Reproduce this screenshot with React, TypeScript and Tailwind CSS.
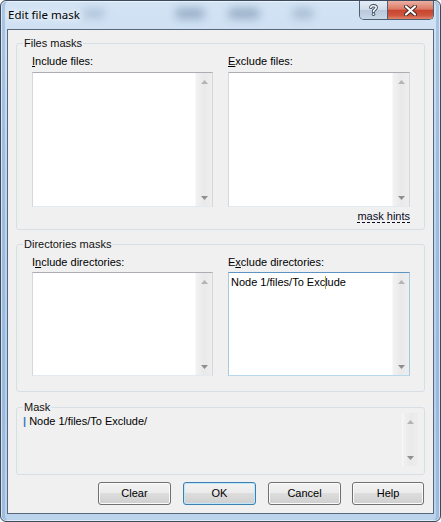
import type { ReactNode } from "react";

// small disabled-looking arrow used by the scroll bars
function Arrow({ dir }: { dir: "up" | "down" }) {
  return (
    <svg width="7" height="4" viewBox="0 0 7 4" className="block">
      {dir === "up" ? (
        <polygon points="3.5,0 7,4 0,4" fill="#b4b4b4" />
      ) : (
        <polygon points="0,0 7,0 3.5,4" fill="#8f8f8f" />
      )}
    </svg>
  );
}

function ScrollBar({ className }: { className: string }) {
  return (
    <div
      className={`flex flex-col justify-between border-l border-[#f8f8f8] bg-[linear-gradient(90deg,#f2f2f2,#e9e9e9_50%,#eeeeee)] ${className}`}
    >
      <div className="flex h-[17px] items-center justify-center">
        <Arrow dir="up" />
      </div>
      <div className="flex h-[17px] items-center justify-center">
        <Arrow dir="down" />
      </div>
    </div>
  );
}

function ListBox({
  size,
  focused,
  children,
}: {
  size: string;
  focused?: boolean;
  children?: ReactNode;
}) {
  return (
    <div
      className={`flex border bg-white ${size} ${
        focused
          ? "border-[#a4c9e3] border-t-[#5d94c4] border-b-[#b7d9ed]"
          : "border-[#d4d7dd] border-t-[#abadb3] border-b-[#e3e9ef]"
      }`}
    >
      <div className="flex-1 pl-[2px] pt-[3px]">{children}</div>
      <ScrollBar className="w-[17px]" />
    </div>
  );
}

function GroupBox({
  title,
  className,
  children,
}: {
  title: string;
  className: string;
  children: ReactNode;
}) {
  return (
    <div className={`relative mx-[8px] rounded-[3px] border border-[#d5dfe5] ${className}`}>
      <span className="absolute -top-[7px] left-[6px] bg-[#f0f0f0] px-[1px] text-[#101010]">
        {title}
      </span>
      {children}
    </div>
  );
}

// label with an underlined access key
function Label({ before, keyChar, after }: { before?: string; keyChar: string; after: string }) {
  return (
    <div className="h-[13px]">
      {before}
      <span className="underline decoration-1 underline-offset-[1px]">{keyChar}</span>
      {after}
    </div>
  );
}

function Button({ label, primary, width = "w-[73px]" }: { label: string; primary?: boolean; width?: string }) {
  return (
    <button
      className={`h-[23px] ${width} rounded-[3px] border bg-[linear-gradient(#f2f2f2_0%,#ebebeb_49%,#dddddd_50%,#cfcfcf_100%)] text-[11px] leading-[13px] text-black ${
        primary
          ? "border-[#3c7fb1] shadow-[inset_0_0_0_1px_#bfe6fb]"
          : "border-[#707070] shadow-[inset_0_0_0_1px_#fbfbfb]"
      }`}
    >
      {label}
    </button>
  );
}

function CaptionButtons() {
  return (
    <div className="ml-auto mr-[6px] flex h-[19px] overflow-hidden rounded-b-[5px] border border-t-0 border-[#4f5f73]">
      <div className="flex w-[28px] items-center justify-center border-r border-[#4f5f73] bg-[linear-gradient(#e4edf7,#d0dcea_48%,#b9c9dc_52%,#c9d7e6)]">
        <svg width="9" height="12" viewBox="0 0 9 12">
          <path
            d="M1.8 3.4 C1.8 1.2 7.2 1.2 7.2 3.6 C7.2 5.4 4.5 5.4 4.5 7.4"
            fill="none"
            stroke="#3a4a5e"
            strokeWidth="3.4"
            strokeLinecap="round"
          />
          <circle cx="4.5" cy="10.2" r="1.7" fill="#3a4a5e" />
          <path
            d="M1.8 3.4 C1.8 1.2 7.2 1.2 7.2 3.6 C7.2 5.4 4.5 5.4 4.5 7.4"
            fill="none"
            stroke="#ffffff"
            strokeWidth="1.6"
            strokeLinecap="round"
          />
          <circle cx="4.5" cy="10.2" r="0.9" fill="#ffffff" />
        </svg>
      </div>
      <div className="flex w-[45px] items-center justify-center bg-[linear-gradient(#eab0a3,#dc7a66_45%,#c84630_52%,#cf553e_80%,#e0866c)]">
        <svg width="13" height="11" viewBox="0 0 13 11">
          <path d="M2 1.5 L11 9.5 M11 1.5 L2 9.5" stroke="#3f2a26" strokeWidth="4" strokeLinecap="round" />
          <path d="M2 1.5 L11 9.5 M11 1.5 L2 9.5" stroke="#ffffff" strokeWidth="2.2" strokeLinecap="round" />
        </svg>
      </div>
    </div>
  );
}

export default function App() {
  return (
    <div className="h-[522px] w-[441px] font-['Liberation_Sans',Arial,sans-serif] text-[11px] leading-[13px] text-black">
      <div className="relative flex h-full flex-col overflow-hidden rounded-[6px] border border-[#3b4a5c] bg-[linear-gradient(180deg,#d2e3f4_0%,#c0d6ee_30%,#b6cfea_70%,#bcd3ec_100%)] shadow-[inset_0_0_0_1px_rgba(255,255,255,0.6),inset_4px_0_0_rgba(120,160,208,0.45),inset_-4px_0_0_rgba(120,160,208,0.45)]">
        {/* glass smudges behind the caption */}
        <div className="absolute left-[82px] top-[8px] h-[9px] w-[22px] rounded-full bg-[#8ea5bf] opacity-50 blur-[4px]" />
        <div className="absolute left-[174px] top-[7px] h-[11px] w-[30px] rounded-full bg-[#6f88a6] opacity-55 blur-[4px]" />
        <div className="absolute left-[227px] top-[7px] h-[11px] w-[32px] rounded-full bg-[#6f88a6] opacity-55 blur-[4px]" />
        <div className="absolute left-[291px] top-[7px] h-[11px] w-[22px] rounded-full bg-[#7d95b1] opacity-45 blur-[4px]" />

        <div className="relative flex h-[28px] items-start">
          <span className="ml-[7px] mt-[6px] font-['Noto_Sans',sans-serif] text-[11.5px] leading-[16px] text-black [text-shadow:0_0_6px_#fff,0_0_10px_#fff]">
            Edit file mask
          </span>
          <CaptionButtons />
        </div>

        <div className="relative mx-[6px] flex h-[485px] flex-col border border-[#56687d] bg-[#f0f0f0]">
          {/* files */}
          <GroupBox title="Files masks" className="mt-[13px] h-[187px] pl-[15px] pr-[14px] pt-[11px]">
            <div className="flex gap-[15px]">
              <div className="flex flex-col">
                <Label keyChar="I" after="nclude files:" />
                <div className="mt-[4px]">
                  <ListBox size="h-[135px] w-[181px]" />
                </div>
              </div>
              <div className="flex flex-col">
                <Label keyChar="E" after="xclude files:" />
                <div className="mt-[4px]">
                  <ListBox size="h-[135px] w-[182px]" />
                </div>
              </div>
            </div>
            <div className="mt-[3px] flex justify-end">
              <span className="underline decoration-dashed decoration-1 underline-offset-[2px] text-[#0a0a1e]">
                mask hints
              </span>
            </div>
          </GroupBox>

          {/* directories */}
          <GroupBox title="Directories masks" className="mt-[14px] h-[148px] pl-[15px] pr-[14px] pt-[11px]">
            <div className="flex gap-[15px]">
              <div className="flex flex-col">
                <Label before="I" keyChar="n" after="clude directories:" />
                <div className="mt-[3px]">
                  <ListBox size="h-[104px] w-[181px]" />
                </div>
              </div>
              <div className="flex flex-col">
                <Label before="E" keyChar="x" after="clude directories:" />
                <div className="mt-[3px]">
                  <ListBox size="h-[104px] w-[182px]" focused>
                    <span>Node 1/files/To Exc</span>
                    <span className="relative">
                      l<span className="absolute left-0 top-0 h-[13px] w-[1px] bg-[#b8a040]" />
                    </span>
                    <span>ude</span>
                  </ListBox>
                </div>
              </div>
            </div>
          </GroupBox>

          {/* resulting mask */}
          <GroupBox title="Mask" className="mt-[15px] flex h-[68px]">
            <div className="flex-1 pl-[6px] pt-[7px]">
              <span className="font-bold text-[#3b7bc0]">|</span> Node 1/files/To Exclude/
            </div>
            <ScrollBar className="mb-[8px] mr-[6px] mt-[5px] w-[16px]" />
          </GroupBox>

          <div className="mt-[7px] flex justify-end gap-[12px] pr-[9px]">
            <Button label="Clear" />
            <Button label="OK" primary />
            <Button label="Cancel" />
            <div className="-ml-[1px]">
              <Button label="Help" width="w-[72px]" />
            </div>
          </div>
        </div>
      </div>
    </div>
  );
}
